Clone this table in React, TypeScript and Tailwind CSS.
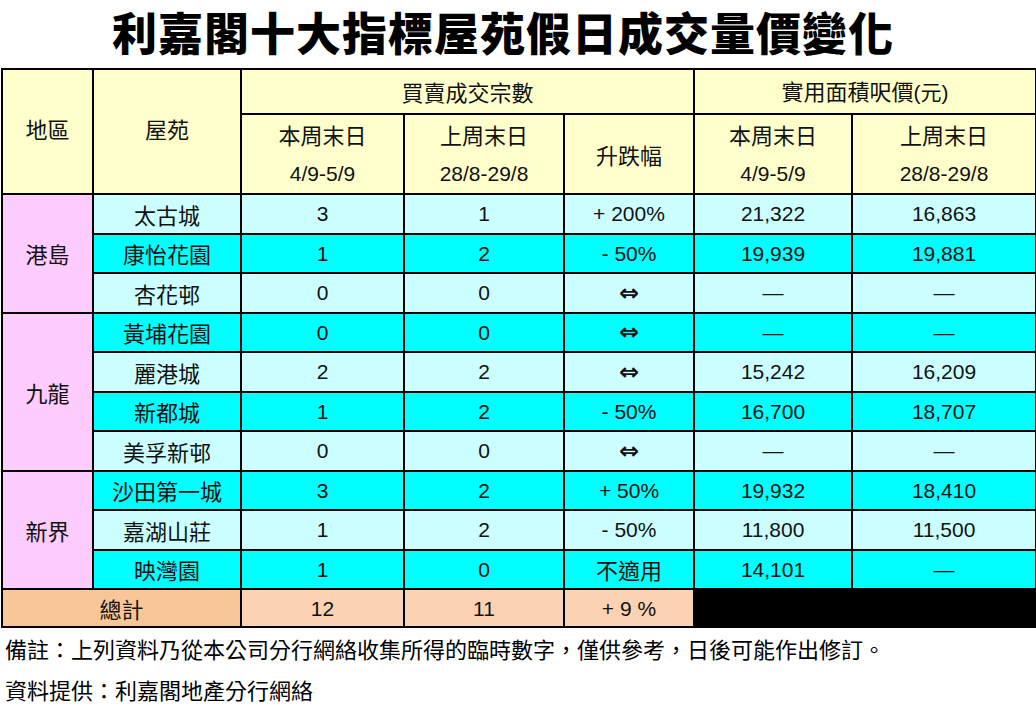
import React from 'react';

const LIGHT = 'bg-[#ccffff]';
const CYAN = 'bg-[#00ffff]';

type Row = {
  name: string;
  cur: string;
  prev: string;
  change: string;
  priceCur: string;
  pricePrev: string;
};

const groups: { region: string; rows: Row[] }[] = [
  {
    region: '港島',
    rows: [
      { name: '太古城', cur: '3', prev: '1', change: '+ 200%', priceCur: '21,322', pricePrev: '16,863' },
      { name: '康怡花園', cur: '1', prev: '2', change: '- 50%', priceCur: '19,939', pricePrev: '19,881' },
      { name: '杏花邨', cur: '0', prev: '0', change: '⇔', priceCur: '—', pricePrev: '—' },
    ],
  },
  {
    region: '九龍',
    rows: [
      { name: '黃埔花園', cur: '0', prev: '0', change: '⇔', priceCur: '—', pricePrev: '—' },
      { name: '麗港城', cur: '2', prev: '2', change: '⇔', priceCur: '15,242', pricePrev: '16,209' },
      { name: '新都城', cur: '1', prev: '2', change: '- 50%', priceCur: '16,700', pricePrev: '18,707' },
      { name: '美孚新邨', cur: '0', prev: '0', change: '⇔', priceCur: '—', pricePrev: '—' },
    ],
  },
  {
    region: '新界',
    rows: [
      { name: '沙田第一城', cur: '3', prev: '2', change: '+ 50%', priceCur: '19,932', pricePrev: '18,410' },
      { name: '嘉湖山莊', cur: '1', prev: '2', change: '- 50%', priceCur: '11,800', pricePrev: '11,500' },
      { name: '映灣園', cur: '1', prev: '0', change: '不適用', priceCur: '14,101', pricePrev: '—' },
    ],
  },
];

const cjk = "font-['Noto_Sans_CJK_TC','Noto_Sans_CJK_SC',sans-serif]";
const num = "font-['Liberation_Sans','Noto_Sans_CJK_TC',sans-serif] text-[21px]";
const td = 'border-2 border-black text-center align-middle p-0 leading-none';
const th = 'border-2 border-black text-center align-middle p-0 font-normal bg-[#ffffcc]';

export default function App() {
  let idx = 0;
  return (
    <div className={`w-[1036px] h-[707px] bg-white text-[#111] ${cjk}`}>
      <h1 className="h-[68px] flex items-center justify-center pr-[30px] pb-[4px] text-[45px] font-black tracking-[1px] text-black">
        利嘉閣十大指標屋苑假日成交量價變化
      </h1>
      <table className="table-fixed border-collapse w-[1034px] ml-[1px] text-[22px]">
        <colgroup>
          <col className="w-[91px]" />
          <col className="w-[148px]" />
          <col className="w-[163px]" />
          <col className="w-[160px]" />
          <col className="w-[130px]" />
          <col className="w-[158px]" />
          <col className="w-[184px]" />
        </colgroup>
        <thead>
          <tr className="h-[45px]">
            <th rowSpan={2} className={`${th} pb-[6px]`}>地區</th>
            <th rowSpan={2} className={`${th} pb-[6px]`}>屋苑</th>
            <th colSpan={3} className={th}>買賣成交宗數</th>
            <th colSpan={2} className={th}>
              實用面積呎價<span className={num}>(元)</span>
            </th>
          </tr>
          <tr className="h-[78px]">
            <th className={`${th} leading-[39px]`}>
              <div>本周末日</div>
              <div className={num}>4/9-5/9</div>
            </th>
            <th className={`${th} leading-[39px]`}>
              <div>上周末日</div>
              <div className={num}>28/8-29/8</div>
            </th>
            <th className={th}>升跌幅</th>
            <th className={`${th} leading-[39px]`}>
              <div>本周末日</div>
              <div className={num}>4/9-5/9</div>
            </th>
            <th className={`${th} leading-[39px]`}>
              <div>上周末日</div>
              <div className={num}>28/8-29/8</div>
            </th>
          </tr>
        </thead>
        <tbody>
          {groups.map((g) =>
            g.rows.map((r, i) => {
              const bg = idx++ % 2 === 0 ? LIGHT : CYAN;
              return (
                <tr key={r.name} className="h-[39.5px]">
                  {i === 0 && (
                    <td rowSpan={g.rows.length} className={`${td} bg-[#ffccff]`}>
                      {g.region}
                    </td>
                  )}
                  <td className={`${td} ${bg}`}>{r.name}</td>
                  <td className={`${td} ${bg} ${num}`}>{r.cur}</td>
                  <td className={`${td} ${bg} ${num}`}>{r.prev}</td>
                  <td className={`${td} ${bg} ${r.change === '不適用' ? '' : num}`}>
                    {r.change === '⇔' ? (
                      <span className="font-['DejaVu_Sans'] text-[24px] font-bold">⇔</span>
                    ) : (
                      r.change
                    )}
                  </td>
                  <td className={`${td} ${bg} ${num}`}>{r.priceCur}</td>
                  <td className={`${td} ${bg} ${num}`}>{r.pricePrev}</td>
                </tr>
              );
            })
          )}
          <tr className="h-[38px]">
            <td colSpan={2} className={`${td} bg-[#f9c698]`}>總計</td>
            <td className={`${td} bg-[#fcd3b2] ${num}`}>12</td>
            <td className={`${td} bg-[#fcd3b2] ${num}`}>11</td>
            <td className={`${td} bg-[#fcd3b2] ${num}`}>+ 9 %</td>
            <td colSpan={2} className="bg-black border-t-2 border-t-white border-b-2 border-b-black"></td>
          </tr>
        </tbody>
      </table>
      <div className="pl-[5px] text-[22px] leading-[41px] text-black">
        <p>備註：上列資料乃從本公司分行網絡收集所得的臨時數字，僅供參考，日後可能作出修訂。</p>
        <p>資料提供：利嘉閣地產分行網絡</p>
      </div>
    </div>
  );
}
